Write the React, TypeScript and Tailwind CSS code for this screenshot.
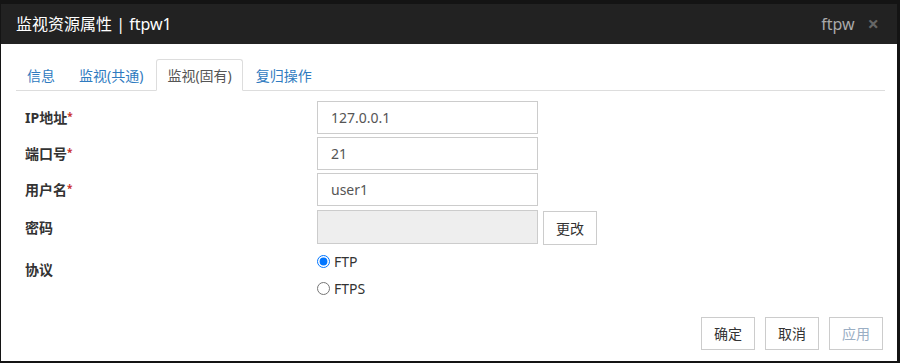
const tabs = ["信息", "监视(共通)", "监视(固有)", "复归操作"];

const fields = [
  { label: "IP地址", value: "127.0.0.1", required: true },
  { label: "端口号", value: "21", required: true },
  { label: "用户名", value: "user1", required: true },
];

const font = "font-['Noto_Sans','Noto_Sans_CJK_SC',sans-serif]";

const Label = ({ text, required }: { text: string; required?: boolean }) => (
  <div className="w-[292px] shrink-0 text-[14px] font-bold text-[#333]">
    {text}
    {required && <sup className="relative -top-[3px] text-[10px] text-[#c9302c]">*</sup>}
  </div>
);

const Btn = ({ children, disabled }: { children: string; disabled?: boolean }) => (
  <button
    className={
      "h-[33px] w-[54px] border border-[#ccc] bg-white text-[14px] " +
      (disabled ? "text-[#9aaec4]" : "text-[#333]")
    }
  >
    {children}
  </button>
);

export default function App() {
  return (
    <div className={`h-[363px] w-[900px] bg-[#141414] ${font}`}>
      <div className="h-[4px]" />
      <div className="ml-[1px] flex h-[357px] w-[896px] flex-col bg-white">
        {/* header */}
        <div className="flex h-[40px] items-center justify-between bg-[#222] pl-[15px] pr-[18px]">
          <div className="text-[16px] text-white">监视资源属性 | ftpw1</div>
          <div className="flex items-center gap-[13px]">
            <span className="text-[16px] text-[#aaa]">ftpw</span>
            <span className="text-[20px] font-bold leading-none text-[#666]">×</span>
          </div>
        </div>

        {/* tabs */}
        <div className="ml-[15px] mr-[12px] mt-[15px] flex border-b border-[#ddd]">
          {tabs.map((t, i) => (
            <div
              key={t}
              className={
                "-mb-px mr-[2px] flex h-[32px] items-center rounded-t-[3px] border px-[10px] text-[14px] " +
                (i === 2
                  ? "border-[#ddd] border-b-white bg-white text-[#555]"
                  : "border-transparent text-[#2f7bc0]")
              }
            >
              {t}
            </div>
          ))}
        </div>

        {/* form */}
        <div className="mt-[10px] flex flex-col gap-[3px] pl-[24px]">
          {fields.map((f) => (
            <div key={f.label} className="flex items-center">
              <Label text={f.label} required={f.required} />
              <div className="flex h-[33px] w-[221px] items-center border border-[#ccc] px-[13px] text-[14px] text-[#555]">
                {f.value}
              </div>
            </div>
          ))}
          <div className="flex items-center">
            <Label text="密码" />
            <div className="h-[34px] w-[221px] border border-[#ccc] bg-[#eee]" />
            <button className="ml-[5px] mt-[2px] h-[34px] w-[54px] border border-[#ccc] bg-white text-[14px] text-[#333]">
              更改
            </button>
          </div>
          <div className="mt-[3px] flex">
            <div className="pt-[8px]">
              <Label text="协议" />
            </div>
            <div className="flex flex-col gap-[7px] text-[14px] text-[#333]">
              <label className="flex h-[20px] items-center gap-[4px]">
                <input type="radio" name="proto" defaultChecked className="m-0 h-[13px] w-[13px]" />
                FTP
              </label>
              <label className="flex h-[20px] items-center gap-[4px]">
                <input type="radio" name="proto" className="m-0 h-[13px] w-[13px]" />
                FTPS
              </label>
            </div>
          </div>
        </div>

        {/* footer */}
        <div className="mt-auto mb-[11px] flex justify-end gap-[10px] pr-[14px]">
          <Btn>确定</Btn>
          <Btn>取消</Btn>
          <Btn disabled>应用</Btn>
        </div>
      </div>
    </div>
  );
}
